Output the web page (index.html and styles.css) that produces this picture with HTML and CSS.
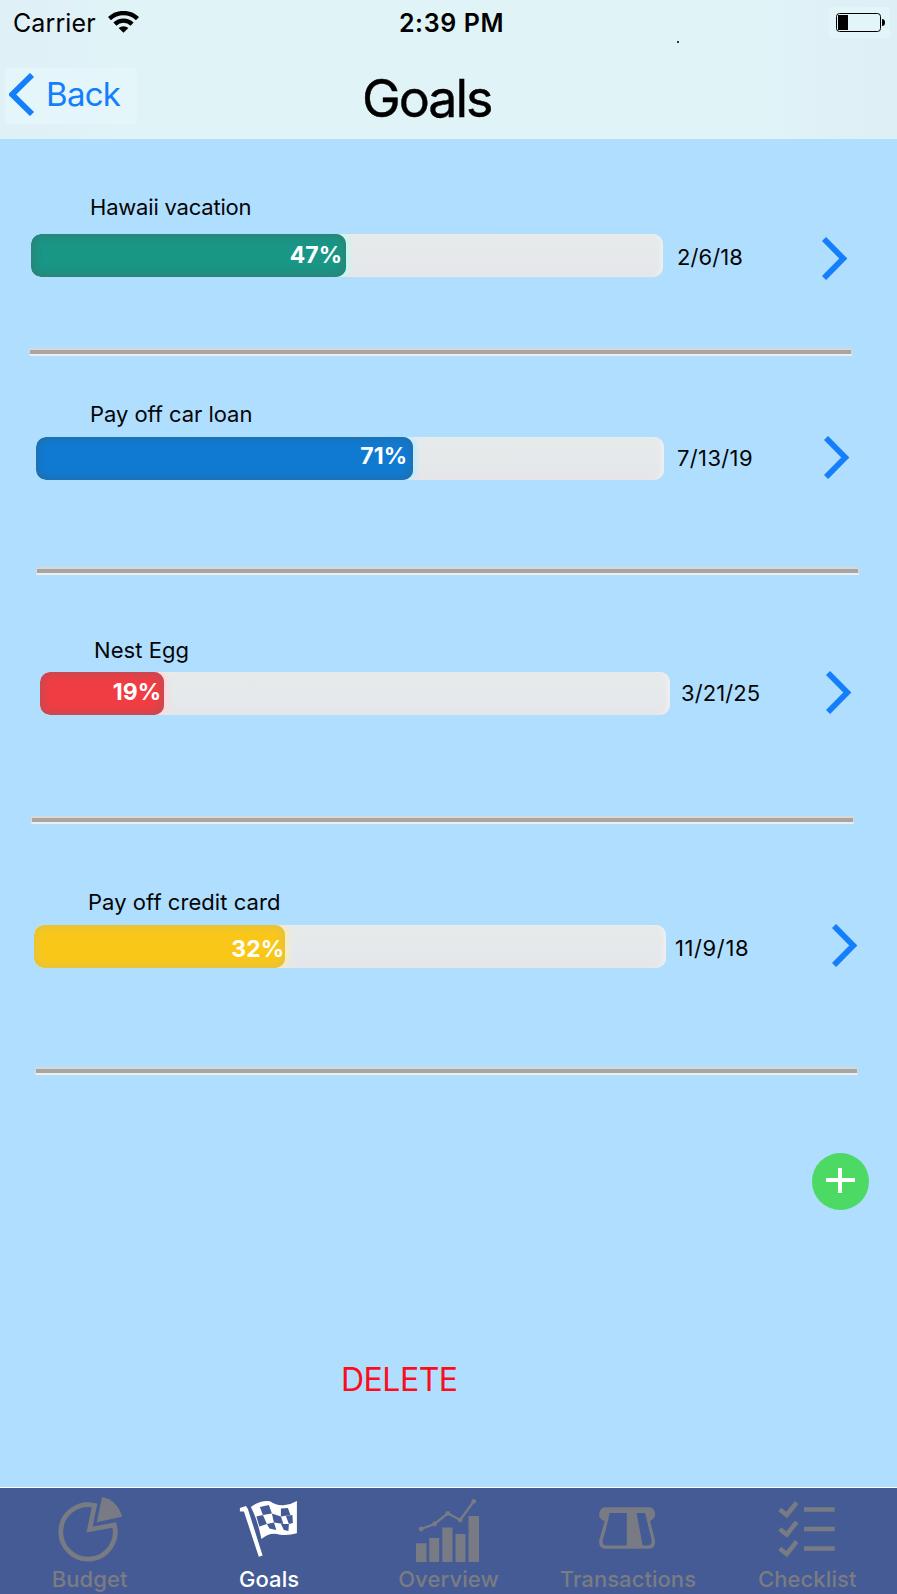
FILE: index.html
```html
<!DOCTYPE html>
<html lang="en">
<head>
<meta charset="utf-8">
<title>Goals</title>
<link rel="stylesheet" href="styles.css">
</head>
<body>
<header class="header">
  <div class="status">
    <div class="carrier"><span class="carrier-name">Carrier</span>
      <svg class="wifi" width="31" height="22" viewBox="0 0 31 22"><g fill="none" stroke="#000" stroke-width="4.4"><path d="M1.500 7.600A20.500 20.500 0 0 1 29.500 7.600"/><path d="M6.900 13.100A12.400 12.400 0 0 1 24.100 13.100"/></g><path d="M10.600 17A7.500 7.500 0 0 1 20.400 17L15.500 21.800Z"/></svg>
    </div>
    <span class="time">2:39 PM</span>
    <svg class="battery" width="61" height="31" viewBox="0 0 61 31"><rect width="61" height="31" fill="#e2f5f9"/><rect x="7.500" y="6.500" width="44" height="18" rx="3" fill="none" stroke="#000"/><rect x="9" y="8" width="10" height="15"/><path d="M53 12Q56 12 56 15.500T53 19Z"/></svg>
  </div>
  <span class="dot"></span>
  <div class="navbar">
    <a class="back"><svg width="26" height="43" viewBox="0 0 26 43"><path d="M23 2L3.200 21.500L23 41" fill="none" stroke="#157efb" stroke-width="5.800"/></svg><span>Back</span></a>
    <h1 class="title">Goals</h1>
  </div>
</header>
<main class="goals">
  <section class="goal goal-vacation">
    <h2 class="name">Hawaii vacation</h2>
    <div class="line"><div class="track"><div class="fill"><span>47%</span></div></div><span class="date">2/6/18</span>
      <svg class="chevron" width="26" height="43" viewBox="0 0 26 43"><path d="M2 2L21.300 21.500L2 41" fill="none" stroke="#157efb" stroke-width="5.800"/></svg></div>
    <div class="divider"></div>
  </section>
  <section class="goal goal-car">
    <h2 class="name">Pay off car loan</h2>
    <div class="line"><div class="track"><div class="fill"><span>71%</span></div></div><span class="date">7/13/19</span>
      <svg class="chevron" width="26" height="43" viewBox="0 0 26 43"><path d="M2 2L21.300 21.500L2 41" fill="none" stroke="#157efb" stroke-width="5.800"/></svg></div>
    <div class="divider"></div>
  </section>
  <section class="goal goal-nest">
    <h2 class="name">Nest Egg</h2>
    <div class="line"><div class="track"><div class="fill"><span>19%</span></div></div><span class="date">3/21/25</span>
      <svg class="chevron" width="26" height="43" viewBox="0 0 26 43"><path d="M2 2L21.300 21.500L2 41" fill="none" stroke="#157efb" stroke-width="5.800"/></svg></div>
    <div class="divider"></div>
  </section>
  <section class="goal goal-credit">
    <h2 class="name">Pay off credit card</h2>
    <div class="line"><div class="track"><div class="fill"><span>32%</span></div></div><span class="date">11/9/18</span>
      <svg class="chevron" width="26" height="43" viewBox="0 0 26 43"><path d="M2 2L21.300 21.500L2 41" fill="none" stroke="#157efb" stroke-width="5.800"/></svg></div>
    <div class="divider"></div>
  </section>
  <svg class="add" width="57" height="57" viewBox="0 0 57 57"><circle cx="28.500" cy="28.500" r="28.500" fill="#4cd964"/><path d="M14 25h12v-10h4v10h13v4h-13v11h-4v-11h-12z" fill="#fff"/></svg>
  <div class="delete">DELETE</div>
</main>
<nav class="tabs">
  <a class="tab">
    <svg width="72" height="78" viewBox="53.700 14 72 78"><path d="M94.200 31.500A27.200 27.200 0 1 0 114 51L89.300 55.500Z" fill="none" stroke="#787b84" stroke-width="4.800"/><path d="M101.700 23Q117 26 121.800 42.700L96.500 48.300Z" fill="#787b84"/></svg>
    <span>Budget</span></a>
  <a class="tab tab-active">
    <svg width="72" height="78" viewBox="233.100 14 72 78"><path d="M240 34l6-2 2 3 14.700 46.500-3.800 1.200L244 37.500h-4z" fill="#fff"/><path d="M251 33Q260 26 270 27.200Q277 32 285 31Q292 30 297 27V59.300Q288 62 279 60.500Q270 58 261.500 65Q258 47 251 33Z" fill="#fff"/><path d="M260 33L269 31L272 39.500L263 41ZM256.500 42.500L263 41L267 50L259.500 52.500ZM267 50L274 48.500L276.500 56L269.500 54.500ZM272 39.500L281 42.500L283.500 50L274 48.500ZM281 34.500L288 34L290.500 41L281 42.500ZM286 42L292.500 41L293 49L289 50ZM281 50L289 50L288.500 57L284 56Z" fill="#455b95"/></svg>
    <span>Goals</span></a>
  <a class="tab">
    <svg width="72" height="78" viewBox="412.500 14 72 78"><g fill="#787b84"><path d="M416.500 69.300h10.500V88h-10.500zM429.700 64h10V88h-10zM442.800 53.500h10.200V88h-10.200zM456 60h10V88h-10zM469 42h10.500V88h-10.500z"/><circle cx="421.700" cy="55" r="2.400"/><circle cx="435" cy="50" r="2.400"/><circle cx="448.300" cy="39.300" r="2.400"/><circle cx="460.700" cy="46" r="2.400"/><circle cx="474.300" cy="27.300" r="2.400"/></g><path d="M421.700 55L435 50L448.300 39.300L460.700 46L474.300 27.300" fill="none" stroke="#787b84" stroke-width="2.300"/></svg>
    <span>Overview</span></a>
  <a class="tab tab-transactions">
    <svg width="72" height="78" viewBox="591.900 14 72 78"><path fill="#787b84" fill-rule="evenodd" d="M604 33.300H650Q655 35 655 40V42Q653 46 650 47L654.800 66Q656 74.700 648.500 74.700H605.500Q598 74.700 599.200 66L604.500 47Q599 45 599 41Q599 35 604 33.300ZM609.500 39Q607.500 50 603 65Q601.500 71 606 71.500H626.700V39ZM636.500 39L642.500 71.500H648Q652.500 71 651.300 65L645 39Z"/></svg>
    <span>Transactions</span></a>
  <a class="tab">
    <svg width="72" height="78" viewBox="771.300 14 72 78"><g fill="none" stroke="#787b84" stroke-width="4.500"><path d="M780 35.500L787 41L797 28.500M780 55L787 60.500L797 48M780 74.500L787 80L797 67.500"/><path d="M804.300 35.500H835M804.300 55H835M804.300 74.500H835"/></g></svg>
    <span>Checklist</span></a>
</nav>
</body>
</html>
```
FILE: styles.css
```css
* { box-sizing: border-box; }
body {
  margin: 0;
  width: 897px;
  height: 1594px;
  display: flex;
  flex-direction: column;
  overflow: hidden;
  background: #b0deff;
  color: #050505;
  font-family: Inter, "Liberation Sans", sans-serif;
}
svg { display: block; flex: none; }
h1, h2 { margin: 0; font-weight: 400; }
span, h1, h2 { white-space: nowrap; }

.header { height: 139px; background: linear-gradient(90deg, #dff0f7, #e0f3f7 12%, #e0f3f7 85%, #deeff6); position: relative; }
.status { height: 68px; padding: 7px 7px 0 13px; display: grid; grid-template-columns: 1fr auto 1fr; align-items: start; }
.carrier { display: flex; }
.carrier-name { width: 95px; font-size: 25px; line-height: 32px; letter-spacing: .1px; color: #000; }
.wifi { margin-top: 4px; }
.time { font-size: 25px; line-height: 32px; font-weight: 600; color: #000; letter-spacing: .6px; }
.battery { justify-self: end; }
.dot { position: absolute; left: 677px; top: 41px; width: 2px; height: 2px; background: #333; }
.navbar { display: flex; padding-left: 5px; }
.back { width: 132px; height: 56px; padding: 5px 0 0 4px; display: flex; background: #e4f6fa; color: #157efb; font-size: 33px; line-height: 42px; letter-spacing: -.7px; }
.back span { margin: 0 0 0 11px; }
.title { margin: 0 0 0 225px; font-size: 52px; line-height: 62px; letter-spacing: -2.100px; color: #000; -webkit-text-stroke: .4px #000; }

.goals { flex: none; height: 1348px; }
.name { margin-left: calc(var(--name-x) - 1px); font-size: 22px; line-height: 26px; letter-spacing: var(--name-track); }
.goal { padding-top: var(--top); }
.line { margin-top: var(--name-gap); padding-left: var(--bar-x); height: 43px; display: flex; align-items: flex-start; }
.track { width: var(--bar-w); height: 43px; border-radius: 10px; background: linear-gradient(#e5eae9, #e5e9ec 60%, #e5e5e9); box-shadow: inset -4px 0 4px -1px #efefef; overflow: hidden; }
.fill { width: var(--fill-w); height: 43px; border-radius: 10px; background: var(--color); box-shadow: inset 0 0 8px 2px var(--edge), 3px 0 4px 1px var(--glow); display: flex; justify-content: flex-end; padding: var(--pct-y) var(--pct-r) 0 0; }
.fill span { color: #fff; font-size: 23px; line-height: 26px; font-weight: 700; }
.date { margin: var(--date-y) 0 0 var(--date-gap); width: var(--date-w); font-size: 22px; line-height: 26px; letter-spacing: var(--date-track, .1px); }
.chevron { margin-top: var(--chev-y); }
.divider { width: 823px; height: 8px; margin: var(--rule-gap) 0 0 var(--rule-x); background: #a6a6a6; border: solid #d9d8d4; border-width: 2px 1px 2px 1px; border-bottom-color: #f0eeea; }

.goal-vacation { --top: 55px; --name-x: 91px; --name-track: -.2px; --name-gap: 14px; --bar-x: 31px; --bar-w: 632px; --fill-w: 315px; --pct-y: 8px; --pct-r: 4px; --date-y: 10px; --date-gap: 14px; --date-w: 145px; --chev-y: 3px; --rule-gap: 71px; --rule-x: 29px; --color: #199685; --edge: #307f76; --glow: #c9f8ec; }
.goal-car { --top: 45px; --name-x: 91px; --name-track: -.05px; --name-gap: 10px; --bar-x: 36px; --bar-w: 628px; --fill-w: 377px; --pct-y: 6px; --pct-r: 6px; --date-y: 8px; --date-gap: 13px; --date-w: 147px; --date-track: .35px; --chev-y: -1px; --rule-gap: 87px; --rule-x: 36px; --color: #107ad3; --edge: #226ea7; --glow: #c3ecfa; }
.goal-nest { --top: 62px; --name-x: 95px; --name-track: .05px; --name-gap: 9px; --bar-x: 40px; --bar-w: 630px; --fill-w: 124px; --pct-y: 7px; --pct-r: 3px; --date-y: 8px; --date-gap: 11px; --date-w: 145px; --chev-y: -1px; --rule-gap: 101px; --rule-x: 31px; --color: #f03d43; --edge: #b84e57; --glow: #ffd8dd; }
.goal-credit { --top: 65px; --name-x: 89px; --name-track: .05px; --name-gap: 10px; --bar-x: 34px; --bar-w: 632px; --fill-w: 251px; --pct-y: 11px; --pct-r: 1px; --date-y: 10px; --date-gap: 9px; --date-w: 157px; --date-track: .6px; --chev-y: -1px; --rule-gap: 99px; --rule-x: 35px; --color: #fac718; --edge: #dec247; --glow: #f8edbd; }

.add { margin: 78px 0 0 812px; }
.delete { margin: 150px 0 0 341px; font-size: 32px; line-height: 40px; letter-spacing: -.5px; color: #fc0d1b; }

.tabs { height: 107px; display: grid; grid-template-columns: repeat(5, 1fr); border-top: 1px solid #fff; background: #455b95; }
.tab { display: flex; flex-direction: column; align-items: center; color: #7b7b81; font-size: 22px; line-height: 26px; font-weight: 500; letter-spacing: .1px; }
.tab-transactions { letter-spacing: .05px; }
.tab-active { color: #fff; }
```
